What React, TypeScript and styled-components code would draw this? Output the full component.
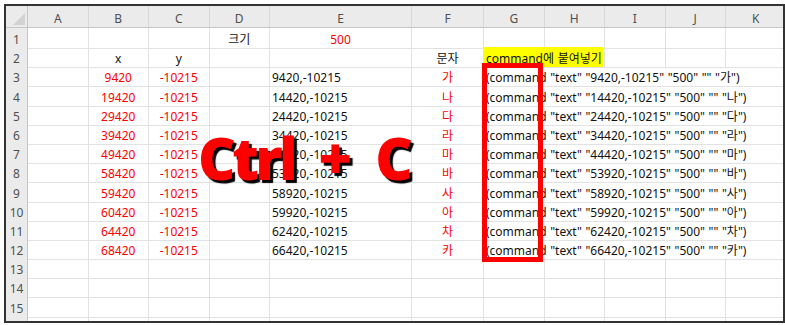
import React from 'react';
import styled, { createGlobalStyle } from 'styled-components';

const Global = createGlobalStyle`
  html, body { margin: 0; padding: 0; background: #fff; }
  body { font-family: "Noto Sans", "Noto Sans CJK KR", sans-serif; }
`;

const WIDTHS = [60.5, 60.5, 60.5, 60.5, 142, 72, 60.5, 60.5, 60.5, 60.5, 60.5];
const LETTERS = ['A', 'B', 'C', 'D', 'E', 'F', 'G', 'H', 'I', 'J', 'K'];
const TEMPLATE = `22px ${WIDTHS.map((w) => `${w}px`).join(' ')}`;

const Frame = styled.div`
  position: relative;
  box-sizing: border-box;
  margin: 4px 0 0 4px;
  width: 781px;
  height: 319px;
  border: 2px solid #333;
  overflow: hidden;
  background: #fff;
`;

const Sheet = styled.div`
  display: flex;
  flex-direction: column;
`;

const HeaderRow = styled.div`
  display: grid;
  grid-template-columns: ${TEMPLATE};
  height: 22px;
  box-sizing: border-box;
  background: #ebebeb;
  border-bottom: 1px solid #c6c6c6;
`;

const Corner = styled.div`
  display: flex;
  align-items: flex-end;
  justify-content: flex-end;
  padding: 0 2px 2px 0;
  border-right: 1px solid #c6c6c6;
  box-sizing: border-box;
`;

const ColHead = styled.div`
  display: flex;
  align-items: center;
  justify-content: center;
  padding-top: 4px;
  box-sizing: border-box;
  border-right: 1px solid #d8d8d8;
  font-size: 12px;
  color: #505050;
`;

const Row = styled.div`
  display: grid;
  grid-template-columns: ${TEMPLATE};
  height: 19.2px;
`;

const RowHead = styled.div`
  display: flex;
  align-items: center;
  justify-content: center;
  padding-top: 3px;
  box-sizing: border-box;
  background: #ebebeb;
  border-right: 1px solid #c6c6c6;
  border-bottom: 1px solid #d8d8d8;
  font-size: 12px;
  color: #505050;
`;

const Cell = styled.div<{ $align: string; $red?: boolean; $open?: boolean; $flush?: boolean }>`
  display: flex;
  align-items: flex-end;
  justify-content: ${(p) => (p.$align === 'center' ? 'center' : 'flex-start')};
  min-width: 0;
  box-sizing: border-box;
  padding: ${(p) => (p.$flush ? '0' : '0 2px 1px')};
  border-right: 1px solid ${(p) => (p.$open ? 'transparent' : '#e2e2e2')};
  border-bottom: 1px solid #e2e2e2;
  white-space: nowrap;
  font-size: 12px;
  line-height: 15px;
  word-spacing: 0.5px;
  color: ${(p) => (p.$red ? '#ff0000' : '#111')};
`;

const Highlight = styled.span`
  display: flex;
  align-items: flex-end;
  align-self: stretch;
  padding: 0 1px 1px 2px;
  background: #ffff00;
  color: #111;
`;

const RedBox = styled.div`
  position: absolute;
  left: 476px;
  top: 57px;
  width: 61px;
  height: 199px;
  box-sizing: border-box;
  border: 5px solid #ff0000;
`;

const Shortcut = styled.div`
  position: absolute;
  left: 192px;
  top: 123px;
  display: flex;
  align-items: baseline;
  font-family: "Open Sans", "Noto Sans", sans-serif;
  font-weight: 800;
  font-size: 58px;
  line-height: 1;
  color: #ff0000;
  text-shadow: 3px 3px 1px #000;
  white-space: pre;
`;

const Key = styled.span<{ $tight?: boolean; $space?: number }>`
  margin-left: ${(p) => p.$space ?? 0}px;
  letter-spacing: ${(p) => (p.$tight ? '-3.5px' : '0')};
`;

type Spec = { text?: React.ReactNode; align?: string; red?: boolean; open?: boolean; highlight?: boolean };

const B = [9420, 19420, 29420, 39420, 49420, 58420, 59420, 60420, 64420, 68420];
const E = ['9420', '14420', '24420', '34420', '44420', '53920', '58920', '59920', '62420', '66420'];
const F = ['가', '나', '다', '라', '마', '바', '사', '아', '차', '카'];

function buildRow(r: number): Spec[] {
  const cells: Spec[] = LETTERS.map(() => ({}));
  if (r === 1) {
    cells[3] = { text: '크기', align: 'center' };
    cells[4] = { text: '500', align: 'center', red: true };
  } else if (r === 2) {
    cells[1] = { text: 'x', align: 'center' };
    cells[2] = { text: 'y', align: 'center' };
    cells[5] = { text: '문자', align: 'center' };
    cells[6] = { text: 'command에 붙여넣기', highlight: true, open: true };
  } else if (r >= 3 && r <= 12) {
    const i = r - 3;
    cells[1] = { text: String(B[i]), align: 'center', red: true };
    cells[2] = { text: '-10215', align: 'center', red: true };
    cells[4] = { text: `${E[i]},-10215` };
    cells[5] = { text: F[i], align: 'center', red: true };
    cells[6] = { text: `(command "text" "${E[i]},-10215" "500" "" "${F[i]}")`, open: true };
    cells[7] = { open: true };
    cells[8] = { open: true };
    cells[9] = { open: true };
  }
  return cells;
}

const ROWS = Array.from({ length: 16 }, (_, i) => i + 1);

export default function App() {
  return (
    <>
      <Global />
      <Frame>
        <Sheet>
          <HeaderRow>
            <Corner>
              <svg width="12" height="12" viewBox="0 0 12 12">
                <polygon points="12,0 12,12 0,12" fill="#d2d2d2" />
              </svg>
            </Corner>
            {LETTERS.map((l) => (
              <ColHead key={l}>{l}</ColHead>
            ))}
          </HeaderRow>
          {ROWS.map((r) => (
            <Row key={r}>
              <RowHead>{r < 16 ? r : ''}</RowHead>
              {buildRow(r).map((c, ci) => (
                <Cell key={ci} $align={c.align || 'left'} $red={c.red} $open={c.open} $flush={c.highlight}>
                  {c.highlight ? <Highlight>{c.text}</Highlight> : c.text}
                </Cell>
              ))}
            </Row>
          ))}
        </Sheet>
        <RedBox />
        <Shortcut>
          <Key $tight>Ctrl</Key>
          <Key $space={24}>+</Key>
          <Key $space={23}>C</Key>
        </Shortcut>
      </Frame>
    </>
  );
}
